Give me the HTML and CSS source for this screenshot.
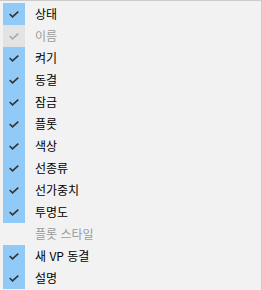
FILE: index.html
```html
<!DOCTYPE html>
<html lang="ko">
<head>
    <meta charset="UTF-8">
    <title>열 메뉴</title>
    <link rel="stylesheet" href="styles.css">
</head>
<body>
    <ul class="menu">
        <li class="item checked"><span class="box"><svg viewBox="0 0 10 7"><polyline points="0.7,3 3.5,5.8 9.3,0.7"/></svg></span><span class="label">상태</span></li>
        <li class="item checked disabled"><span class="box"><svg viewBox="0 0 10 7"><polyline points="0.7,3 3.5,5.8 9.3,0.7"/></svg></span><span class="label">이름</span></li>
        <li class="item checked"><span class="box"><svg viewBox="0 0 10 7"><polyline points="0.7,3 3.5,5.8 9.3,0.7"/></svg></span><span class="label">켜기</span></li>
        <li class="item checked"><span class="box"><svg viewBox="0 0 10 7"><polyline points="0.7,3 3.5,5.8 9.3,0.7"/></svg></span><span class="label">동결</span></li>
        <li class="item checked"><span class="box"><svg viewBox="0 0 10 7"><polyline points="0.7,3 3.5,5.8 9.3,0.7"/></svg></span><span class="label">잠금</span></li>
        <li class="item checked"><span class="box"><svg viewBox="0 0 10 7"><polyline points="0.7,3 3.5,5.8 9.3,0.7"/></svg></span><span class="label">플롯</span></li>
        <li class="item checked"><span class="box"><svg viewBox="0 0 10 7"><polyline points="0.7,3 3.5,5.8 9.3,0.7"/></svg></span><span class="label">색상</span></li>
        <li class="item checked"><span class="box"><svg viewBox="0 0 10 7"><polyline points="0.7,3 3.5,5.8 9.3,0.7"/></svg></span><span class="label">선종류</span></li>
        <li class="item checked"><span class="box"><svg viewBox="0 0 10 7"><polyline points="0.7,3 3.5,5.8 9.3,0.7"/></svg></span><span class="label">선가중치</span></li>
        <li class="item checked"><span class="box"><svg viewBox="0 0 10 7"><polyline points="0.7,3 3.5,5.8 9.3,0.7"/></svg></span><span class="label">투명도</span></li>
        <li class="item disabled"><span class="box"></span><span class="label">플롯 스타일</span></li>
        <li class="item checked"><span class="box"><svg viewBox="0 0 10 7"><polyline points="0.7,3 3.5,5.8 9.3,0.7"/></svg></span><span class="label">새 VP 동결</span></li>
        <li class="item checked"><span class="box"><svg viewBox="0 0 10 7"><polyline points="0.7,3 3.5,5.8 9.3,0.7"/></svg></span><span class="label">설명</span></li>
    </ul>
</body>
</html>
```

FILE: styles.css
```css
body {
    margin: 0;
    background: #f2f2f2;
    font-family: "Noto Sans CJK KR", "Noto Sans", sans-serif;
    font-size: 12px;
}
.menu {
    list-style: none;
    margin: 0;
    padding: 2px 0 1px 3px;
    height: 290px;
    box-sizing: border-box;
    border-top: 1px solid #cccccc;
    border-right: 1px solid #cccccc;
    background: #f2f2f2;
}
.item {
    display: flex;
    align-items: center;
    height: 22px;
    color: #000;
}
.box {
    width: 22px;
    height: 22px;
    display: flex;
    align-items: center;
    justify-content: center;
}
.checked .box {
    background: #91c9f7;
}
.box svg {
    width: 10px;
    height: 7px;
    fill: none;
    stroke: #333333;
    stroke-width: 1.6;
}
.label {
    margin-left: 10px;
    line-height: 22px;
}
.disabled {
    color: #9a9a9a;
}
.checked.disabled .box {
    background: #e3e3e3;
}
.checked.disabled .box svg {
    stroke: #a8a8a8;
}
```
